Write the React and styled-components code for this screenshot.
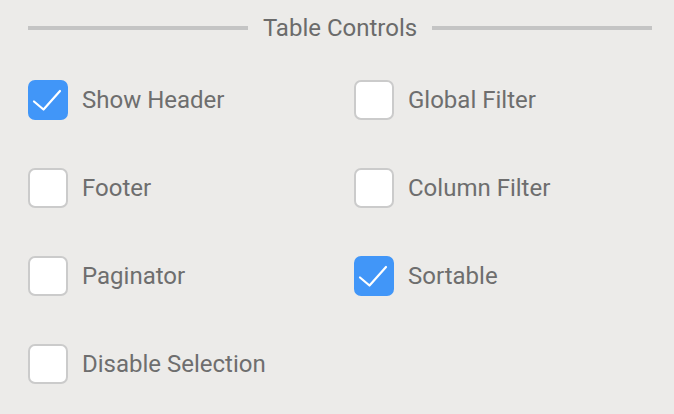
import React, { useState } from "react";
import styled, { createGlobalStyle } from "styled-components";

const Global = createGlobalStyle`
  html, body { margin: 0; padding: 0; background: #ecebe9; }
  body { font-family: Roboto, "Liberation Sans", sans-serif; }
`;

const Panel = styled.div`
  width: 674px;
  height: 414px;
  box-sizing: border-box;
  padding: 12px 22px 0 28px;
  background: #ecebe9;
`;

const Legend = styled.div`
  display: flex;
  align-items: center;
  gap: 15px;
  height: 32px;
  color: #6b6b6b;
  font-size: 24px;
`;

const Line = styled.div`
  flex: 1;
  height: 4px;
  background: #c4c4c4;
`;

const Grid = styled.div`
  display: grid;
  grid-template-columns: 326px 1fr;
  grid-auto-rows: 88px;
  margin-top: 36px;
`;

const Item = styled.label`
  display: flex;
  align-items: center;
  gap: 14px;
  height: 40px;
  cursor: pointer;
  color: #6e6e6e;
  font-size: 24px;
`;

const Box = styled.span`
  width: 40px;
  height: 40px;
  box-sizing: border-box;
  border-radius: 7px;
  border: 2px solid ${(p) => (p.$checked ? "#4196f8" : "#cbcbcb")};
  background: ${(p) => (p.$checked ? "#4196f8" : "#ffffff")};
  display: flex;
  align-items: center;
  justify-content: center;
  flex-shrink: 0;
`;

const Check = () => (
  <svg width="40" height="40" viewBox="0 0 40 40" style={{ margin: -2 }}>
    <path d="M6 21.5 L15.5 29.5 L32 11" fill="none" stroke="#fff" strokeWidth="2.2" strokeLinecap="round" strokeLinejoin="round" />
  </svg>
);

const items = [
  ["Show Header", true],
  ["Global Filter", false],
  ["Footer", false],
  ["Column Filter", false],
  ["Paginator", false],
  ["Sortable", true],
  ["Disable Selection", false],
];

export default function App() {
  const [state, setState] = useState(items.map((i) => i[1]));
  return (
    <Panel>
      <Global />
      <Legend>
        <Line />
        Table Controls
        <Line />
      </Legend>
      <Grid>
        {items.map(([label], i) => (
          <Item key={label} onClick={() => setState((s) => s.map((v, j) => (j === i ? !v : v)))}>
            <Box $checked={state[i]}>{state[i] && <Check />}</Box>
            {label}
          </Item>
        ))}
      </Grid>
    </Panel>
  );
}
